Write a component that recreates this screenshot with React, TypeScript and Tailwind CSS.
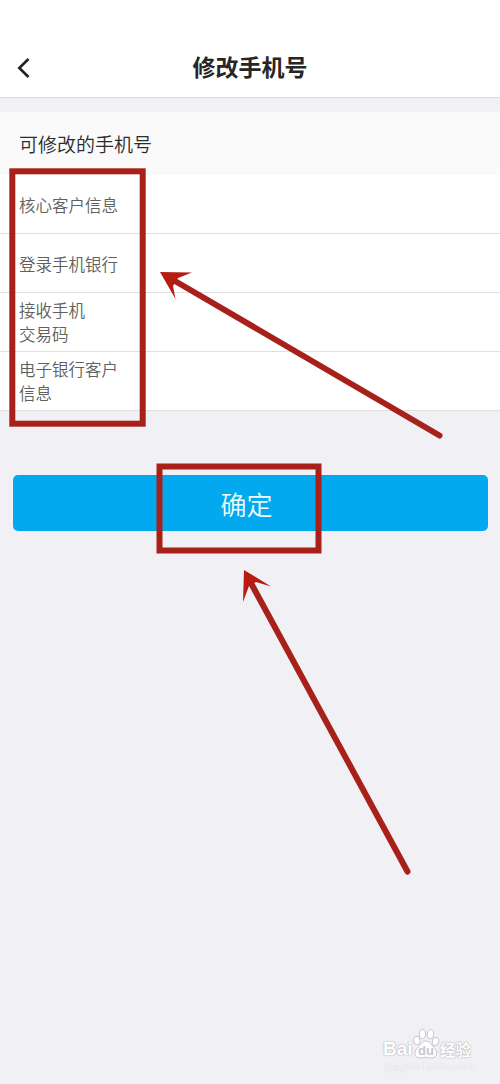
const rows: string[][] = [
  ['核心客户信息'],
  ['登录手机银行'],
  ['接收手机', '交易码'],
  ['电子银行客户', '信息'],
];

function Header() {
  return (
    <header className="grid h-[98px] grid-cols-[50px_1fr_50px] items-center border-b border-[#dcdce0] bg-white pt-[38px]">
      <button aria-label="返回" className="flex pl-[17px]">
        <svg width="14" height="20" viewBox="0 0 14 20" fill="none" stroke="#222" strokeWidth="2.6">
          <path d="M11.5 1 L2.3 10 L11.5 19" />
        </svg>
      </button>
      <h1 className="pb-[3px] text-center text-[23px] leading-[32px] font-bold text-[#262626]">修改手机号</h1>
    </header>
  );
}

function Watermark() {
  return (
    <div className="absolute right-[24px] bottom-[10px] flex w-[93px] flex-col text-white [text-shadow:0_0_1px_#aaa,0_0_2px_#b8b8bc]">
      <div className="flex h-[31px] items-end">
        <span className="w-[29px] font-['Liberation_Sans',sans-serif] text-[19px] leading-[20px] font-bold">Bai</span>
        <svg width="28" height="31" viewBox="0 0 27 31" fill="#fff" stroke="#c6c6ca" strokeWidth="1">
          <ellipse cx="4.2" cy="12.5" rx="3.2" ry="4.2" transform="rotate(-12 4.2 12.5)" />
          <ellipse cx="10" cy="6" rx="3.2" ry="4.6" />
          <ellipse cx="18" cy="6.2" rx="3.2" ry="4.6" transform="rotate(10 18 6.2)" />
          <ellipse cx="23" cy="13.5" rx="3.2" ry="4.2" transform="rotate(15 23 13.5)" />
          <path d="M13.5 13 C17 13 18 16 21 19 C26 23 25 30 19 30 C16 30 15 29.3 13.5 29.3 C11 29.3 10 30 7.5 30 C1 30 1 23 5.5 19.5 C9 16.5 9.5 13 13.5 13Z" />
          <text x="13.5" y="27" textAnchor="middle" className="font-['Liberation_Sans',sans-serif] text-[13px] font-bold [text-shadow:none]" fill="#c6c6ca" stroke="none">du</text>
        </svg>
        <span className="text-[15.5px] leading-[20px] font-bold whitespace-nowrap">经验</span>
      </div>
      <span className="pl-[2px] font-['Liberation_Sans',sans-serif] text-[11px] leading-[15px] whitespace-nowrap text-[#fafafc] [text-shadow:0_0_1px_#c4c4c8]">jingyan.baidu.com</span>
    </div>
  );
}

function Annotations() {
  return (
    <svg className="pointer-events-none absolute inset-0" width="500" height="1084" viewBox="0 0 500 1084" fill="none" stroke="#a7211a" strokeWidth="6">
      <rect x="12.3" y="171.3" width="130.4" height="252.4" />
      <rect x="159.5" y="466.5" width="159" height="84" />
      <path d="M175 281 L439.5 435.5" strokeLinecap="round" />
      <path d="M252 585 L407.5 871.5" strokeLinecap="round" />
      <path d="M160 272 L192 272.4 L178 278 L173 286 L175.5 299 Z" fill="#b71c13" stroke="none" />
      <path d="M244 570 L271 586.5 L256 582 L249 586 L243 602 Z" fill="#b71c13" stroke="none" />
    </svg>
  );
}

export default function App() {
  return (
    <main className="relative flex h-[1084px] w-[500px] flex-col overflow-hidden bg-[#f0f0f5] font-['Noto_Sans_CJK_SC',sans-serif]">
      <Header />
      <section className="flex flex-col pt-[14px]">
        <h2 className="flex h-[63px] items-center bg-[#fafafb] pl-[19px] text-[19px] leading-7 font-[350] text-[#2c2c2c]">可修改的手机号</h2>
        <ul className="flex flex-col bg-white">
          {rows.map((lines) => (
            <li
              key={lines[0]}
              className={`flex h-[59px] flex-col justify-center border-b border-[#e0e0e2] pl-[19px] text-[16.5px] leading-6 font-[350] text-[#606060] ${lines.length === 1 ? 'pt-[2px]' : ''}`}
            >
              {lines.map((line) => (
                <span key={line}>{line}</span>
              ))}
            </li>
          ))}
        </ul>
      </section>
      <div className="flex pt-16 pr-3 pl-[13px]">
        <button className="flex h-14 w-full items-center justify-center rounded-[5px] bg-[#02a9ee] pt-px pr-2 text-[26px] leading-9 font-[350] text-[#effdff]">确定</button>
      </div>
      <Annotations />
      <Watermark />
    </main>
  );
}
